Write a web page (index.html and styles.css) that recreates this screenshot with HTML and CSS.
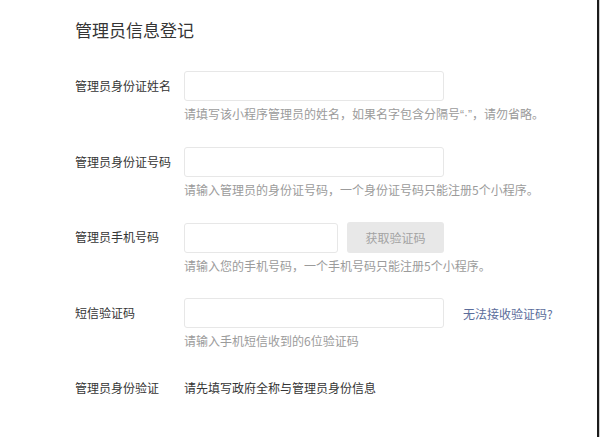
FILE: index.html
```html
<!DOCTYPE html>
<html lang="zh-CN">
<head>
    <meta charset="UTF-8">
    <title>管理员信息登记</title>
    <link rel="stylesheet" href="styles.css">
</head>
<body>
<div class="page">
    <h2 class="title">管理员信息登记</h2>
    <div class="form">
        <div class="row">
            <label class="label">管理员身份证姓名</label>
            <div class="field">
                <div class="control">
                    <input class="input" type="text">
                </div>
                <p class="tip">请填写该小程序管理员的姓名，如果名字包含分隔号<span class="latin">“·”</span>，请勿省略。</p>
            </div>
        </div>
        <div class="row">
            <label class="label">管理员身份证号码</label>
            <div class="field">
                <div class="control">
                    <input class="input" type="text">
                </div>
                <p class="tip">请输入管理员的身份证号码，一个身份证号码只能注册5个小程序。</p>
            </div>
        </div>
        <div class="row">
            <label class="label">管理员手机号码</label>
            <div class="field">
                <div class="control">
                    <input class="input input-short" type="text">
                    <a class="btn-code">获取验证码</a>
                </div>
                <p class="tip">请输入您的手机号码，一个手机号码只能注册5个小程序。</p>
            </div>
        </div>
        <div class="row">
            <label class="label">短信验证码</label>
            <div class="field">
                <div class="control">
                    <input class="input" type="text">
                    <a class="link">无法接收验证码?</a>
                </div>
                <p class="tip">请输入手机短信收到的6位验证码</p>
            </div>
        </div>
        <div class="row">
            <label class="label">管理员身份验证</label>
            <div class="field">
                <div class="text">请先填写政府全称与管理员身份信息</div>
            </div>
        </div>
    </div>
</div>
</body>
</html>
```

FILE: styles.css
```css
* {
    margin: 0;
    padding: 0;
    box-sizing: border-box;
}

html {
    background-color: #cfcfcf;
}

body {
    width: 600px;
    height: 437px;
    font-family: "Noto Sans CJK SC", "Liberation Sans", sans-serif;
    color: #353535;
}

.page {
    width: 599px;
    height: 437px;
    background-color: #fff;
    border-right: 2px solid #1c1c1c;
    padding: 18px 0 0 75px;
    overflow: hidden;
}

.title {
    font-size: 17px;
    font-weight: normal;
    line-height: 24px;
    margin-bottom: 29px;
    color: #353535;
}

.row {
    display: flex;
    margin-bottom: 23px;
}

.label {
    width: 109px;
    flex-shrink: 0;
    font-size: 12px;
    line-height: 30px;
    color: #353535;
}

.field {
    display: flex;
    flex-direction: column;
}

.control {
    display: flex;
    align-items: center;
}

.input {
    width: 260px;
    height: 30px;
    border: 1px solid #e7e7e7;
    border-radius: 3px;
    outline: none;
    background-color: #fff;
}

.input-short {
    width: 154px;
}

.btn-code {
    display: inline-block;
    width: 97px;
    height: 31px;
    line-height: 31px;
    margin-left: 9px;
    text-align: center;
    font-size: 12px;
    color: #a3a3a3;
    background-color: #e8e8e8;
    border-radius: 3px;
}

.link {
    margin-left: 19px;
    font-size: 12px;
    color: #5b6d9b;
}

.tip {
    margin-top: 4px;
    font-size: 12px;
    line-height: 18px;
    color: #9b9b9b;
}

.latin {
    font-family: "Liberation Sans", sans-serif;
}

.text {
    font-size: 12px;
    line-height: 30px;
    color: #353535;
}
```
